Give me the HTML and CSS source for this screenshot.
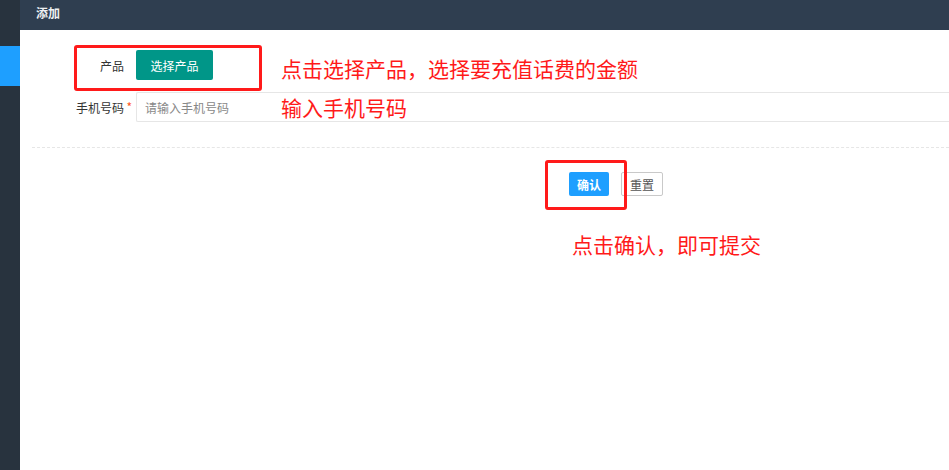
FILE: index.html
```html
<!DOCTYPE html>
<html lang="zh-CN">
<head>
    <meta charset="UTF-8">
    <title>添加</title>
    <link rel="stylesheet" href="styles.css">
</head>
<body>
    <div class="layout">
        <div class="side">
            <div class="side-active"></div>
        </div>
        <div class="main">
            <div class="main-header">添加</div>
            <div class="main-body">
                <form class="form">
                    <div class="form-item">
                        <label class="form-label">产品</label>
                        <button type="button" class="btn btn-green">选择产品</button>
                    </div>
                    <div class="form-item">
                        <label class="form-label required">手机号码</label>
                        <input class="form-input" type="text" placeholder="请输入手机号码">
                    </div>
                    <div class="form-line"></div>
                    <div class="form-actions">
                        <button type="button" class="btn-sm btn-blue">确认</button>
                        <button type="reset" class="btn-sm btn-plain">重置</button>
                    </div>
                </form>

                <!-- annotations -->
                <div class="mark mark-product"></div>
                <div class="mark mark-submit"></div>
                <div class="note note-product">点击选择产品，选择要充值话费的金额</div>
                <div class="note note-phone">输入手机号码</div>
                <div class="note note-submit">点击确认，即可提交</div>
            </div>
        </div>
    </div>
</body>
</html>
```

FILE: styles.css
```css
body {
    margin: 0;
    padding: 0;
    font-family: "Noto Sans CJK SC", "Noto Sans", sans-serif;
    font-size: 12px;
    color: #333;
    background-color: #fff;
}
.layout {
    display: flex;
    height: 470px;
}
.side {
    width: 20px;
    flex-shrink: 0;
    background-color: #28333e;
    padding-top: 46px;
    box-sizing: border-box;
}
.side-active {
    height: 40px;
    background-color: #1e9fff;
}
.main {
    flex: 1;
    display: flex;
    flex-direction: column;
    min-width: 0;
}
.main-header {
    height: 30px;
    line-height: 26px;
    padding-left: 16px;
    background-color: #2f3e50;
    color: #eef0f3;
    font-size: 12px;
    font-weight: bold;
}
.main-body {
    position: relative;
    flex: 1;
}
.form {
    padding: 20px 0 0 12px;
}
.form-item {
    display: flex;
    align-items: center;
    margin-bottom: 12px;
}
.form-label {
    position: relative;
    width: 92px;
    padding-right: 12px;
    text-align: right;
    color: #333;
}
.form-label.required::after {
    content: "*";
    position: absolute;
    right: 4px;
    top: -1px;
    color: #ff5722;
}
.btn {
    height: 30px;
    padding: 0 14px;
    border: none;
    border-radius: 2px;
    font-family: inherit;
    font-size: 12px;
    color: #fff;
}
.btn-green {
    width: 77px;
    background-color: #009688;
}
.form-input {
    flex: 1;
    height: 30px;
    box-sizing: border-box;
    border: 1px solid #e6e6e6;
    border-right: none;
    border-radius: 2px 0 0 2px;
    padding: 0 8px;
    font-family: inherit;
    font-size: 12px;
    outline: none;
}
.form-input::placeholder {
    color: #888;
}
.form-line {
    margin-top: 25px;
    border-top: 1px dashed #e6e6e6;
}
.form-actions {
    display: flex;
    gap: 12px;
    padding: 24px 0 0 537px;
}
.btn-sm {
    width: 40px;
    height: 24px;
    padding: 0;
    border-radius: 2px;
    font-family: inherit;
    font-size: 12px;
    box-sizing: border-box;
}
.btn-blue {
    border: none;
    background-color: #1e9fff;
    color: #fff;
    font-weight: bold;
}
.btn-plain {
    width: 42px;
    border: 1px solid #c9c9c9;
    background-color: #fff;
    color: #555;
}
.mark {
    position: absolute;
    border: 3px solid #ff1a1a;
    border-radius: 3px;
    box-sizing: border-box;
}
.mark-product {
    left: 54px;
    top: 15px;
    width: 188px;
    height: 46px;
}
.mark-submit {
    left: 525px;
    top: 130px;
    width: 82px;
    height: 50px;
}
.note {
    position: absolute;
    font-size: 21px;
    line-height: 24px;
    color: #ff1a1a;
    white-space: nowrap;
}
.note-product {
    left: 261px;
    top: 26px;
}
.note-phone {
    left: 261px;
    top: 65px;
}
.note-submit {
    left: 552px;
    top: 202px;
}
```
